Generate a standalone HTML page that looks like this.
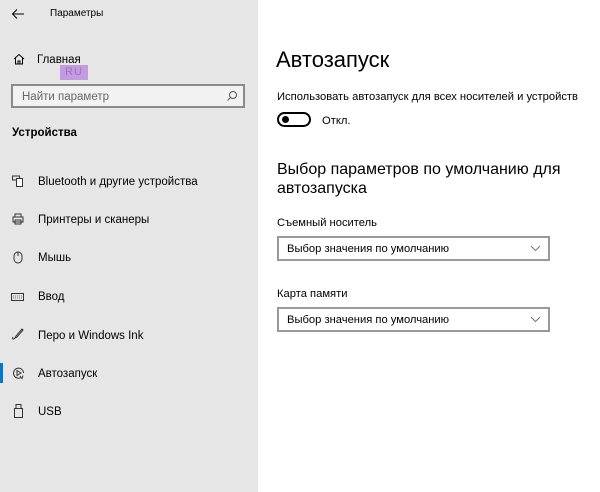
<!DOCTYPE html>
<html><head><meta charset="utf-8"><style>
*{margin:0;padding:0;box-sizing:border-box}
body{width:600px;height:492px;background:#fff;font-family:"Liberation Sans",sans-serif;color:#000;position:relative;overflow:hidden}
.side{position:absolute;left:0;top:0;width:258px;height:492px;background:#e6e6e6}
.a{position:absolute;white-space:nowrap}
.t{font-size:11.5px;line-height:14px}
.r{font-size:11.2px;line-height:14px}
.dd{position:absolute;left:277px;width:273px;height:25px;border:2px solid #999;background:#fff;font-size:11.2px;padding:5px 0 0 8px}
.dd svg{position:absolute;right:7px;top:7px}
svg{position:absolute}
</style></head><body>
<div class="side"></div>
<svg style="left:11px;top:8px" width="14" height="12" viewBox="0 0 14 12"><path d="M13 6H2M6 1.5L1.5 6 6 10.5" stroke="#000" fill="none" stroke-width="1"/></svg>
<div class="a" style="left:50px;top:8px;font-size:10px">Параметры</div>
<svg style="left:13px;top:53px" width="12" height="12" viewBox="0 0 12 12"><path d="M1 6L6 1.5 11 6M2.5 5v6h7V5M5 11V8h2v3" stroke="#000" fill="none"/></svg>
<div class="a t" style="left:37px;top:53px">Главная</div>
<div class="a" style="left:60px;top:65px;width:28px;height:15px;background:#c49ae0;color:#9a77b5;font-size:11px;text-align:center;line-height:15px;letter-spacing:1px">RU</div>
<div class="a" style="left:11px;top:84px;width:234px;height:24px;border:2px solid #8a8a8a;background:#f2f2f2"></div>
<div class="a t" style="left:22px;top:90px;color:#666">Найти параметр</div>
<svg style="left:226px;top:90px" width="12" height="12" viewBox="0 0 12 12"><circle cx="7" cy="5" r="3.5" stroke="#555" fill="none"/><path d="M4.5 7.5L1.5 10.5" stroke="#555"/></svg>
<div class="a" style="left:12px;top:127px;font-size:11.5px;font-weight:bold">Устройства</div>

<svg style="left:12px;top:175px" width="12" height="12" viewBox="0 0 12 12"><rect x="0.5" y="1" width="7" height="4" fill="none" stroke="#333"/><rect x="4.5" y="3.5" width="6" height="8" fill="#fff" stroke="#333"/></svg>
<div class="a t" style="left:38px;top:175px">Bluetooth и другие устройства</div>
<svg style="left:12px;top:213px" width="12" height="12" viewBox="0 0 12 12"><path d="M3 4V1h6v3M1 4h10v5H1zM3 7h6v4H3z" stroke="#333" fill="none"/></svg>
<div class="a t" style="left:38px;top:213px">Принтеры и сканеры</div>
<svg style="left:13px;top:251px" width="10" height="13" viewBox="0 0 10 13"><rect x="1" y="1" width="8" height="11" rx="4" fill="none" stroke="#333"/><path d="M5 1v4" stroke="#333"/></svg>
<div class="a t" style="left:38px;top:251px">Мышь</div>
<svg style="left:11px;top:293px" width="13" height="8" viewBox="0 0 13 8"><rect x="0.5" y="0.5" width="12" height="7" fill="none" stroke="#333"/><path d="M2 3h9M2 5h9" stroke="#777" stroke-dasharray="1 1"/></svg>
<div class="a t" style="left:38px;top:290px">Ввод</div>
<svg style="left:11px;top:328px" width="13" height="13" viewBox="0 0 13 13"><path d="M11 1L5 8 4 10 6 9 12 2zM4 10C2 12 1 11 2 9" stroke="#333" fill="none"/></svg>
<div class="a t" style="left:38px;top:329px">Перо и Windows Ink</div>
<div class="a" style="left:0;top:363px;width:3px;height:20px;background:#0078d7"></div>
<svg style="left:12px;top:366px" width="13" height="14" viewBox="0 0 13 14"><path d="M9 11.5A5 5 0 1 1 11.5 7" stroke="#333" fill="none"/><path d="M5 4.5v5l4-2.5z" stroke="#333" fill="none"/><path d="M8 10l2 2.5 1-3" stroke="#333" fill="none"/></svg>
<div class="a t" style="left:38px;top:367px">Автозапуск</div>
<svg style="left:14px;top:404px" width="9" height="14" viewBox="0 0 9 14"><rect x="2" y="0.5" width="5" height="4" fill="none" stroke="#333"/><rect x="0.5" y="4.5" width="8" height="9" fill="none" stroke="#333"/></svg>
<div class="a t" style="left:38px;top:405px">USB</div>

<div class="a" style="left:276px;top:46px;font-size:22px;line-height:28px">Автозапуск</div>
<div class="a r" style="left:277px;top:90px">Использовать автозапуск для всех носителей и устройств</div>
<div class="a" style="left:277px;top:112px;width:34px;height:15px;border:2px solid #000;border-radius:8px"></div>
<div class="a" style="left:282px;top:116px;width:7px;height:7px;border-radius:50%;background:#000"></div>
<div class="a r" style="left:322px;top:114px">Откл.</div>
<div class="a" style="left:277px;top:160px;font-size:16px;line-height:19px">Выбор параметров по умолчанию для<br>автозапуска</div>
<div class="a r" style="left:277px;top:216px">Съемный носитель</div>
<div class="dd" style="top:236px">Выбор значения по умолчанию<svg width="11" height="7" viewBox="0 0 11 7"><path d="M1 1l4.5 4.5L10 1" stroke="#777" fill="none"/></svg></div>
<div class="a r" style="left:277px;top:287px">Карта памяти</div>
<div class="dd" style="top:307px">Выбор значения по умолчанию<svg width="11" height="7" viewBox="0 0 11 7"><path d="M1 1l4.5 4.5L10 1" stroke="#777" fill="none"/></svg></div>
</body></html>
